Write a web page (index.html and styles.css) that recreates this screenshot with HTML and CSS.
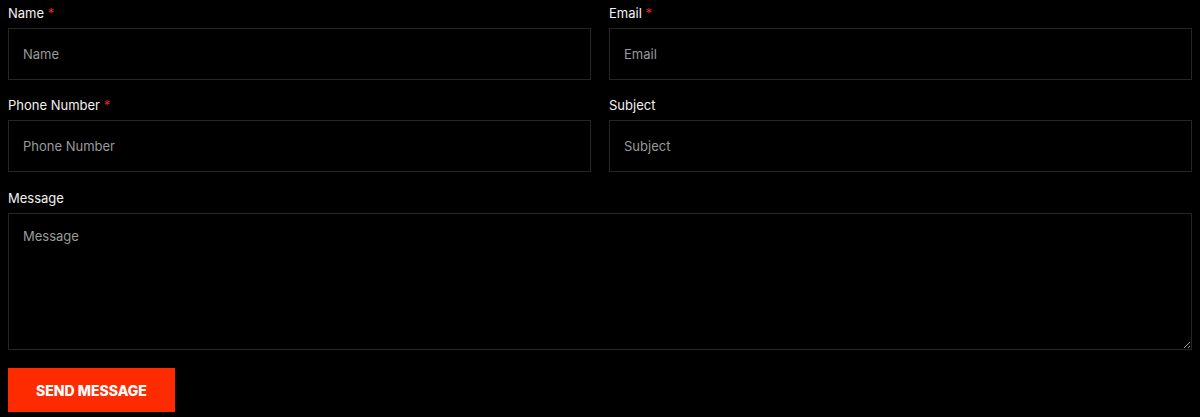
FILE: index.html
```html
<!DOCTYPE html>
<html lang="en">
<head>
  <meta charset="UTF-8">
  <meta name="viewport" content="width=device-width, initial-scale=1.0">
  <title>Contact</title>
  <link rel="stylesheet" href="styles.css">
</head>
<body>
  <form class="contact-form">
    <div class="row">
      <div class="field">
        <label>Name <span class="req">*</span></label>
        <input type="text" placeholder="Name">
      </div>
      <div class="field">
        <label>Email <span class="req">*</span></label>
        <input type="email" placeholder="Email">
      </div>
    </div>
    <div class="row">
      <div class="field">
        <label>Phone Number <span class="req">*</span></label>
        <input type="text" placeholder="Phone Number">
      </div>
      <div class="field">
        <label>Subject</label>
        <input type="text" placeholder="Subject">
      </div>
    </div>
    <div class="field field-message">
      <label>Message</label>
      <textarea placeholder="Message"></textarea>
    </div>
    <button type="submit">Send Message</button>
  </form>
</body>
</html>
```

FILE: styles.css
```css
/* Global */
body {
  margin: 0;
  background-color: #000;
  color: #eee;
  font-family: Inter, "Open Sans", sans-serif;
}

/* Form */
.contact-form {
  padding: 3px 8px 0;
}

.row {
  display: grid;
  grid-template-columns: 1fr 1fr;
  gap: 18px;
}

.field {
  margin-bottom: 15px;
}

.field-message {
  margin-top: 1px;
}

.field label {
  display: block;
  font-size: 13px;
  line-height: 20px;
  margin-bottom: 5px;
  color: #f2f2f2;
}

.req {
  color: #e8251a;
}

.field input,
.field textarea {
  display: block;
  box-sizing: border-box;
  width: 100%;
  background-color: #000;
  border: 1px solid #262626;
  color: #ccc;
  font-family: inherit;
  font-size: 13px;
  padding: 0 14px;
  outline: none;
}

.field input {
  height: 52px;
}

.field textarea {
  height: 137px;
  padding-top: 14px;
}

.field input::placeholder,
.field textarea::placeholder {
  color: #9a9a9a;
}

/* Button */
button {
  margin-top: 3px;
  background-color: #ff2b00;
  border: none;
  color: #fff;
  font-family: inherit;
  font-weight: 800;
  font-size: 14px;
  text-transform: uppercase;
  width: 167px;
  height: 44px;
  cursor: pointer;
}

button:hover {
  background-color: #e62600;
}
```
